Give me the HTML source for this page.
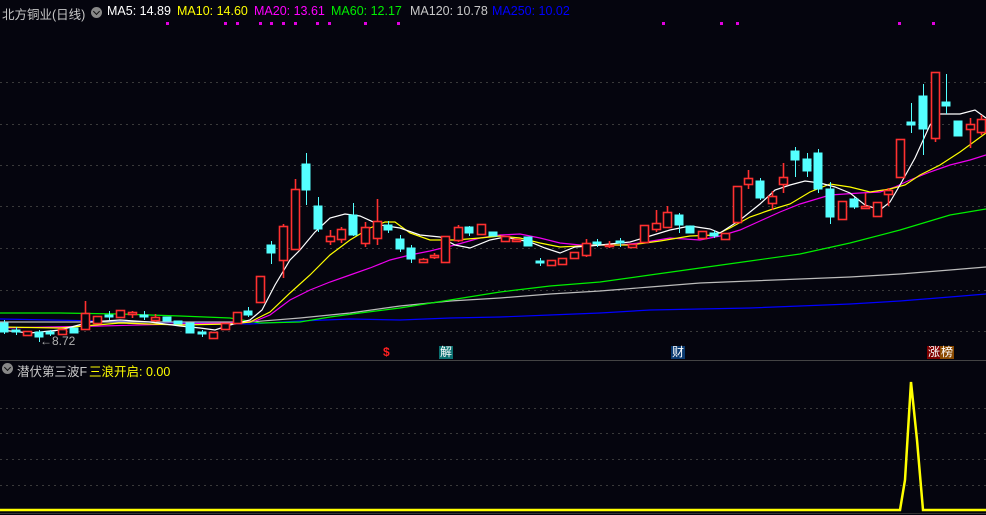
<!DOCTYPE html>
<html><head><meta charset="utf-8"><style>
html,body{margin:0;padding:0;background:#05050e;width:986px;height:515px;overflow:hidden;font-family:"Liberation Sans","Noto Sans CJK SC",sans-serif}
.t{position:absolute;font-size:12.5px;white-space:nowrap;top:4px}
.ic{position:absolute;width:11px;height:11px;border-radius:50%;background:#888}
.ic:after{content:"";position:absolute;left:3px;top:2px;width:4px;height:4px;border-right:1.5px solid #111;border-bottom:1.5px solid #111;transform:rotate(45deg)}
.mk{position:absolute;font-size:12px;line-height:13px;height:13px;color:#fff;padding:0 1px}
</style></head><body>
<svg width="986" height="515" style="position:absolute;left:0;top:0">
<g stroke="#3a3a3a" stroke-dasharray="2 4" stroke-width="1" shape-rendering="crispEdges">
<line x1="0" x2="986" y1="82.5" y2="82.5"/><line x1="0" x2="986" y1="124.5" y2="124.5"/><line x1="0" x2="986" y1="165.5" y2="165.5"/><line x1="0" x2="986" y1="206.5" y2="206.5"/><line x1="0" x2="986" y1="248.5" y2="248.5"/><line x1="0" x2="986" y1="290.5" y2="290.5"/><line x1="0" x2="986" y1="331.5" y2="331.5"/>
<line x1="0" x2="986" y1="408.5" y2="408.5"/><line x1="0" x2="986" y1="433.5" y2="433.5"/><line x1="0" x2="986" y1="459.5" y2="459.5"/><line x1="0" x2="986" y1="485.5" y2="485.5"/>
</g>
<line x1="0" x2="986" y1="360.5" y2="360.5" stroke="#444"/>
<line x1="0" x2="986" y1="513.5" y2="513.5" stroke="#333"/>
<g fill="#e000e0">
<rect x="166" y="22" width="3" height="3"/><rect x="224" y="22" width="3" height="3"/><rect x="236" y="22" width="3" height="3"/><rect x="259" y="22" width="3" height="3"/><rect x="270" y="22" width="3" height="3"/><rect x="282" y="22" width="3" height="3"/><rect x="294" y="22" width="3" height="3"/><rect x="316" y="22" width="3" height="3"/><rect x="328" y="22" width="3" height="3"/><rect x="364" y="22" width="3" height="3"/><rect x="397" y="22" width="3" height="3"/><rect x="662" y="22" width="3" height="3"/><rect x="720" y="22" width="3" height="3"/><rect x="736" y="22" width="3" height="3"/><rect x="898" y="22" width="3" height="3"/><rect x="932" y="22" width="3" height="3"/>
</g>
<g fill="none" stroke-width="1.2">
<polyline stroke="#0000ff" points="0,319 50,320 100,321 150,322 200,323 250,324 300,321 350,319 400,320 450,318 500,317 550,315 600,313 650,310 700,309 750,308 800,306 850,304 900,301 950,297 986,294"/>
<polyline stroke="#bbbbbb" points="0,322 100,322 200,322 250,322 300,318 350,313 400,306 450,301 500,298 550,294 600,291 650,287 700,283 750,281 800,279 850,277 900,274 950,270 986,267"/>
<polyline stroke="#00ee00" points="0,313 60,313 120,314 180,316 230,318 260,323 300,322 330,317 360,313 400,308 450,300 500,292 550,286 600,282 650,275 700,268 750,261 800,254 850,243 900,230 950,215 986,209"/>
<polyline stroke="#ee00ee" points="0,328 100,326 180,324 230,323 255,321 270,315 290,300 310,290 330,282 350,275 370,268 390,260 410,255 430,251 455,245 480,238 500,235 520,234 540,238 560,243 580,245 620,245 640,243 670,238 700,240 720,236 740,230 760,221 780,212 800,204 830,195 860,193 880,192 895,187 910,180 930,172 950,165 970,160 986,155"/>
<polyline stroke="#ffff00" points="0,327 60,328 120,323 180,325 230,324 250,322 270,312 290,293 310,275 330,255 350,240 370,228 385,222 395,222 410,233 430,240 455,240 480,238 500,236 520,238 540,243 560,247 580,246 600,245 630,245 660,241 690,236 715,235 730,228 750,217 770,210 790,204 810,192 830,184 850,187 870,192 890,189 905,185 920,175 940,165 960,152 986,133"/>
<polyline stroke="#ffffff" points="0,330 30,333 60,330 90,322 120,320 150,322 180,326 200,328 215,330 230,325 250,320 262,310 275,285 290,260 300,250 315,232 330,218 345,214 360,216 380,225 400,228 420,235 440,237 455,245 470,248 490,240 505,237 530,242 545,248 560,253 575,247 590,246 610,244 630,242 650,236 670,230 690,226 710,229 720,233 740,220 750,212 760,204 775,190 790,185 805,181 820,183 835,187 850,193 865,205 880,210 890,202 900,185 915,158 930,125 940,114 960,114 975,110 986,118"/>
</g>
<g stroke="#54ffff" fill="#54ffff" shape-rendering="crispEdges">
<path d="M4.5 320V334M16.5 327V335M39.5 330V342M50.5 330V336M109.5 311V320M144.5 311V320M202.5 330V337M248.5 307V317M271.5 241V264M306.5 153V205M318.5 197V232M353.5 203V236M388.5 221V233M400.5 235V252M411.5 245V263M469.5 226V236M540.5 258V266M597.5 239V247M620.5 238V247M679.5 213V233M714.5 230V238M760.5 178V200M795.5 147V177M807.5 153V177M818.5 149V193M830.5 182V224M854.5 197V209M911.5 103V133M923.5 84V155M946.5 74V114"/>
<rect x="0" y="323" width="8" height="9"/><rect x="12" y="330" width="8" height="2"/><rect x="35" y="332" width="8" height="5"/><rect x="46" y="332" width="8" height="2"/><rect x="70" y="328" width="8" height="5"/><rect x="105" y="315" width="8" height="2"/><rect x="140" y="315" width="8" height="2"/><rect x="163" y="317" width="8" height="4"/><rect x="174" y="321" width="8" height="3"/><rect x="186" y="323" width="8" height="10"/><rect x="198" y="332" width="8" height="2"/><rect x="244" y="311" width="8" height="4"/><rect x="267" y="245" width="8" height="8"/><rect x="302" y="164" width="8" height="26"/><rect x="314" y="206" width="8" height="23"/><rect x="349" y="215" width="8" height="20"/><rect x="384" y="225" width="8" height="5"/><rect x="396" y="239" width="8" height="10"/><rect x="407" y="248" width="8" height="11"/><rect x="465" y="227" width="8" height="6"/><rect x="489" y="232" width="8" height="4"/><rect x="524" y="237" width="8" height="9"/><rect x="536" y="261" width="8" height="2"/><rect x="593" y="242" width="8" height="2"/><rect x="616" y="241" width="8" height="2"/><rect x="675" y="215" width="8" height="10"/><rect x="686" y="226" width="8" height="7"/><rect x="710" y="233" width="8" height="3"/><rect x="756" y="181" width="8" height="17"/><rect x="791" y="151" width="8" height="9"/><rect x="803" y="159" width="8" height="12"/><rect x="814" y="153" width="8" height="36"/><rect x="826" y="189" width="8" height="28"/><rect x="850" y="199" width="8" height="8"/><rect x="907" y="122" width="8" height="3"/><rect x="919" y="96" width="8" height="33"/><rect x="942" y="102" width="8" height="4"/><rect x="954" y="121" width="8" height="15"/>
</g>
<g stroke="#ff3030" stroke-width="1.6" fill="#05050e">
<path d="M85.5 301V313M132.5 311V318M155.5 314V322M283.5 224V226M283.5 260V278M295.5 179V189M330.5 230V245M341.5 227V243M365.5 222V247M377.5 199V245M423.5 258V263M434.5 253V259M458.5 225V242M586.5 239V257M609.5 241V248M656.5 210V232M667.5 206V228M748.5 170V189M772.5 191V210M783.5 163V193M865.5 193V209M888.5 188V206M970.5 118V148M981.5 115V135M935.5 138V142"/>
<rect x="23.5" y="331.5" width="8" height="4"/><rect x="58.5" y="329.5" width="8" height="5"/><rect x="81.5" y="313.5" width="8" height="16"/><rect x="93.5" y="316.5" width="8" height="7"/><rect x="116.5" y="310.5" width="8" height="7"/><rect x="128.5" y="312.5" width="8" height="2"/><rect x="151.5" y="317.5" width="8" height="3"/><rect x="209.5" y="332.5" width="8" height="6"/><rect x="221.5" y="323.5" width="8" height="6"/><rect x="233.5" y="312.5" width="8" height="11"/><rect x="256.5" y="276.5" width="8" height="26"/><rect x="279.5" y="226.5" width="8" height="34"/><rect x="291.5" y="189.5" width="8" height="60"/><rect x="326.5" y="236.5" width="8" height="5"/><rect x="337.5" y="229.5" width="8" height="10"/><rect x="361.5" y="227.5" width="8" height="16"/><rect x="373.5" y="221.5" width="8" height="17"/><rect x="419.5" y="259.5" width="8" height="3"/><rect x="430.5" y="255.5" width="8" height="2"/><rect x="441.5" y="236.5" width="8" height="26"/><rect x="454.5" y="227.5" width="8" height="13"/><rect x="477.5" y="224.5" width="8" height="10"/><rect x="501.5" y="236.5" width="8" height="5"/><rect x="512.5" y="239.5" width="8" height="2"/><rect x="547.5" y="260.5" width="8" height="5"/><rect x="558.5" y="258.5" width="8" height="6"/><rect x="570.5" y="252.5" width="8" height="6"/><rect x="582.5" y="243.5" width="8" height="12"/><rect x="605.5" y="245.5" width="8" height="1"/><rect x="628.5" y="244.5" width="8" height="3"/><rect x="640.5" y="225.5" width="8" height="17"/><rect x="652.5" y="223.5" width="8" height="6"/><rect x="663.5" y="212.5" width="8" height="15"/><rect x="698.5" y="231.5" width="8" height="7"/><rect x="721.5" y="233.5" width="8" height="6"/><rect x="733.5" y="186.5" width="8" height="36"/><rect x="744.5" y="178.5" width="8" height="6"/><rect x="768.5" y="196.5" width="8" height="7"/><rect x="779.5" y="177.5" width="8" height="7"/><rect x="838.5" y="201.5" width="8" height="18"/><rect x="861.5" y="206.5" width="8" height="2"/><rect x="873.5" y="202.5" width="8" height="14"/><rect x="884.5" y="190.5" width="8" height="4"/><rect x="896.5" y="139.5" width="8" height="38"/><rect x="931.5" y="72.5" width="8" height="66"/><rect x="966.5" y="124.5" width="8" height="5"/><rect x="977.5" y="119.5" width="8" height="13"/>
</g>
<polyline fill="none" stroke="#ffff00" stroke-width="2.5" points="0,510 900,510 905,480 911,382 917,440 923,510 986,510"/>
</svg>
<div class="t" style="left:2px;color:#c8c8c8">北方铜业(日线)</div>
<div class="ic" style="left:91px;top:7px"></div>
<div class="t" style="left:107px;color:#fff">MA5: 14.89</div>
<div class="t" style="left:177px;color:#ffff00">MA10: 14.60</div>
<div class="t" style="left:254px;color:#ff00ff">MA20: 13.61</div>
<div class="t" style="left:331px;color:#00ee00">MA60: 12.17</div>
<div class="t" style="left:410px;color:#c8c8c8">MA120: 10.78</div>
<div class="t" style="left:492px;color:#0000ff">MA250: 10.02</div>
<div class="t" style="left:40px;top:334px;color:#b0b0b0;font-size:12px">←8.72</div>
<div class="mk" style="left:382px;top:346px;color:#ff2020;font-weight:bold">$</div>
<div class="mk" style="left:439px;top:346px;background:#0a7070">解</div>
<div class="mk" style="left:671px;top:346px;background:#0a3a70">财</div>
<div class="mk" style="left:927px;top:346px;background:#800000">涨</div>
<div class="mk" style="left:940px;top:346px;background:#8a4a00">榜</div>
<div class="ic" style="left:2px;top:363px"></div>
<div class="t" style="left:17px;top:361px;color:#c8c8c8">潜伏第三波F</div>
<div class="t" style="left:89px;top:361px;color:#ffff00">三浪开启: 0.00</div>
</body></html>
